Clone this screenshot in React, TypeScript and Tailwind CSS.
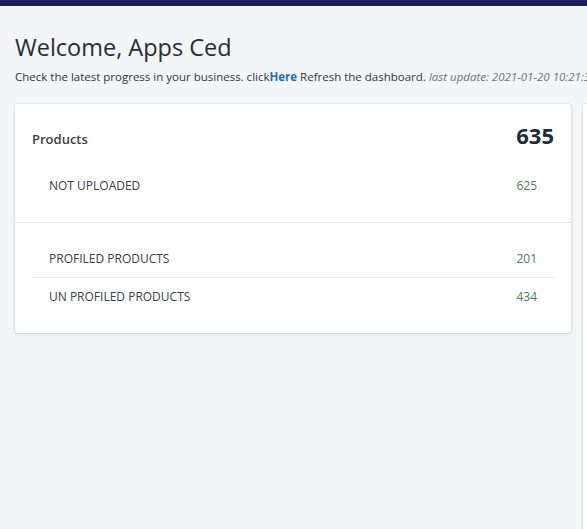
export default function App() {
  const rows = [
    { label: "PROFILED PRODUCTS", value: 201 },
    { label: "UN PROFILED PRODUCTS", value: 434 },
  ];

  return (
    <div
      className="h-[529px] overflow-hidden bg-[#f4f5f8] text-[#212b36]"
      style={{ fontFamily: '"Open Sans", "Noto Sans", sans-serif' }}
    >
      <div className="h-[6px] bg-[#1c1f5c]" />

      <div className="px-[15px] pt-[26px]">
        <h1 className="text-[23.5px] leading-[30px] font-normal text-[#262d36]">Welcome, Apps Ced</h1>
        <p className="mt-[7px] whitespace-nowrap text-[11.5px] leading-[16px] text-[#2f3640]">
          Check the latest progress in your business. click
          <a className="font-bold text-[#1f6fb2]">Here</a> Refresh the dashboard.{" "}
          <i className="text-[#6b7280]">last update: 2021-01-20 10:21:34</i>
        </p>
      </div>

      <div className="mt-[19px] flex items-start gap-[12px] pl-[15px]">
        <section className="w-[556px] shrink-0 rounded-[3px] bg-white shadow-[0_0_0_1px_rgba(63,63,68,0.05),0_1px_3px_0_rgba(63,63,68,0.15)]">
          <div className="px-[17px] pt-[16px]">
            <div className="flex items-start justify-between">
              <h2 className="mt-[10px] text-[13px] leading-[18px] font-semibold text-[#3a4049]">Products</h2>
              <span className="text-[22px] leading-[30px] font-bold text-[#212b36]">635</span>
            </div>
            <div className="flex items-center justify-between px-[17px] pt-[28px] pb-[28px] text-[12px] leading-[16px] text-[#3a4049]">
              <span>NOT UPLOADED</span>
              <span className="text-[#4d7a5a]">625</span>
            </div>
          </div>

          <div className="border-t border-[#e6e8eb] px-[17px] pt-[28px] pb-[28px]">
            {rows.map((row, i) => (
              <div
                key={row.label}
                className={`flex items-center justify-between px-[17px] text-[12px] leading-[16px] text-[#3a4049] ${
                  i === 0 ? "border-b border-[#e6e8eb] pb-[10px]" : "pt-[11px]"
                }`}
              >
                <span>{row.label}</span>
                <span className="text-[#4d7a5a]">{row.value}</span>
              </div>
            ))}
          </div>
        </section>

        <section className="h-[500px] w-[200px] shrink-0 rounded-[3px] bg-white shadow-[0_0_0_1px_rgba(63,63,68,0.05),0_1px_3px_0_rgba(63,63,68,0.15)]" />
      </div>
    </div>
  );
}
